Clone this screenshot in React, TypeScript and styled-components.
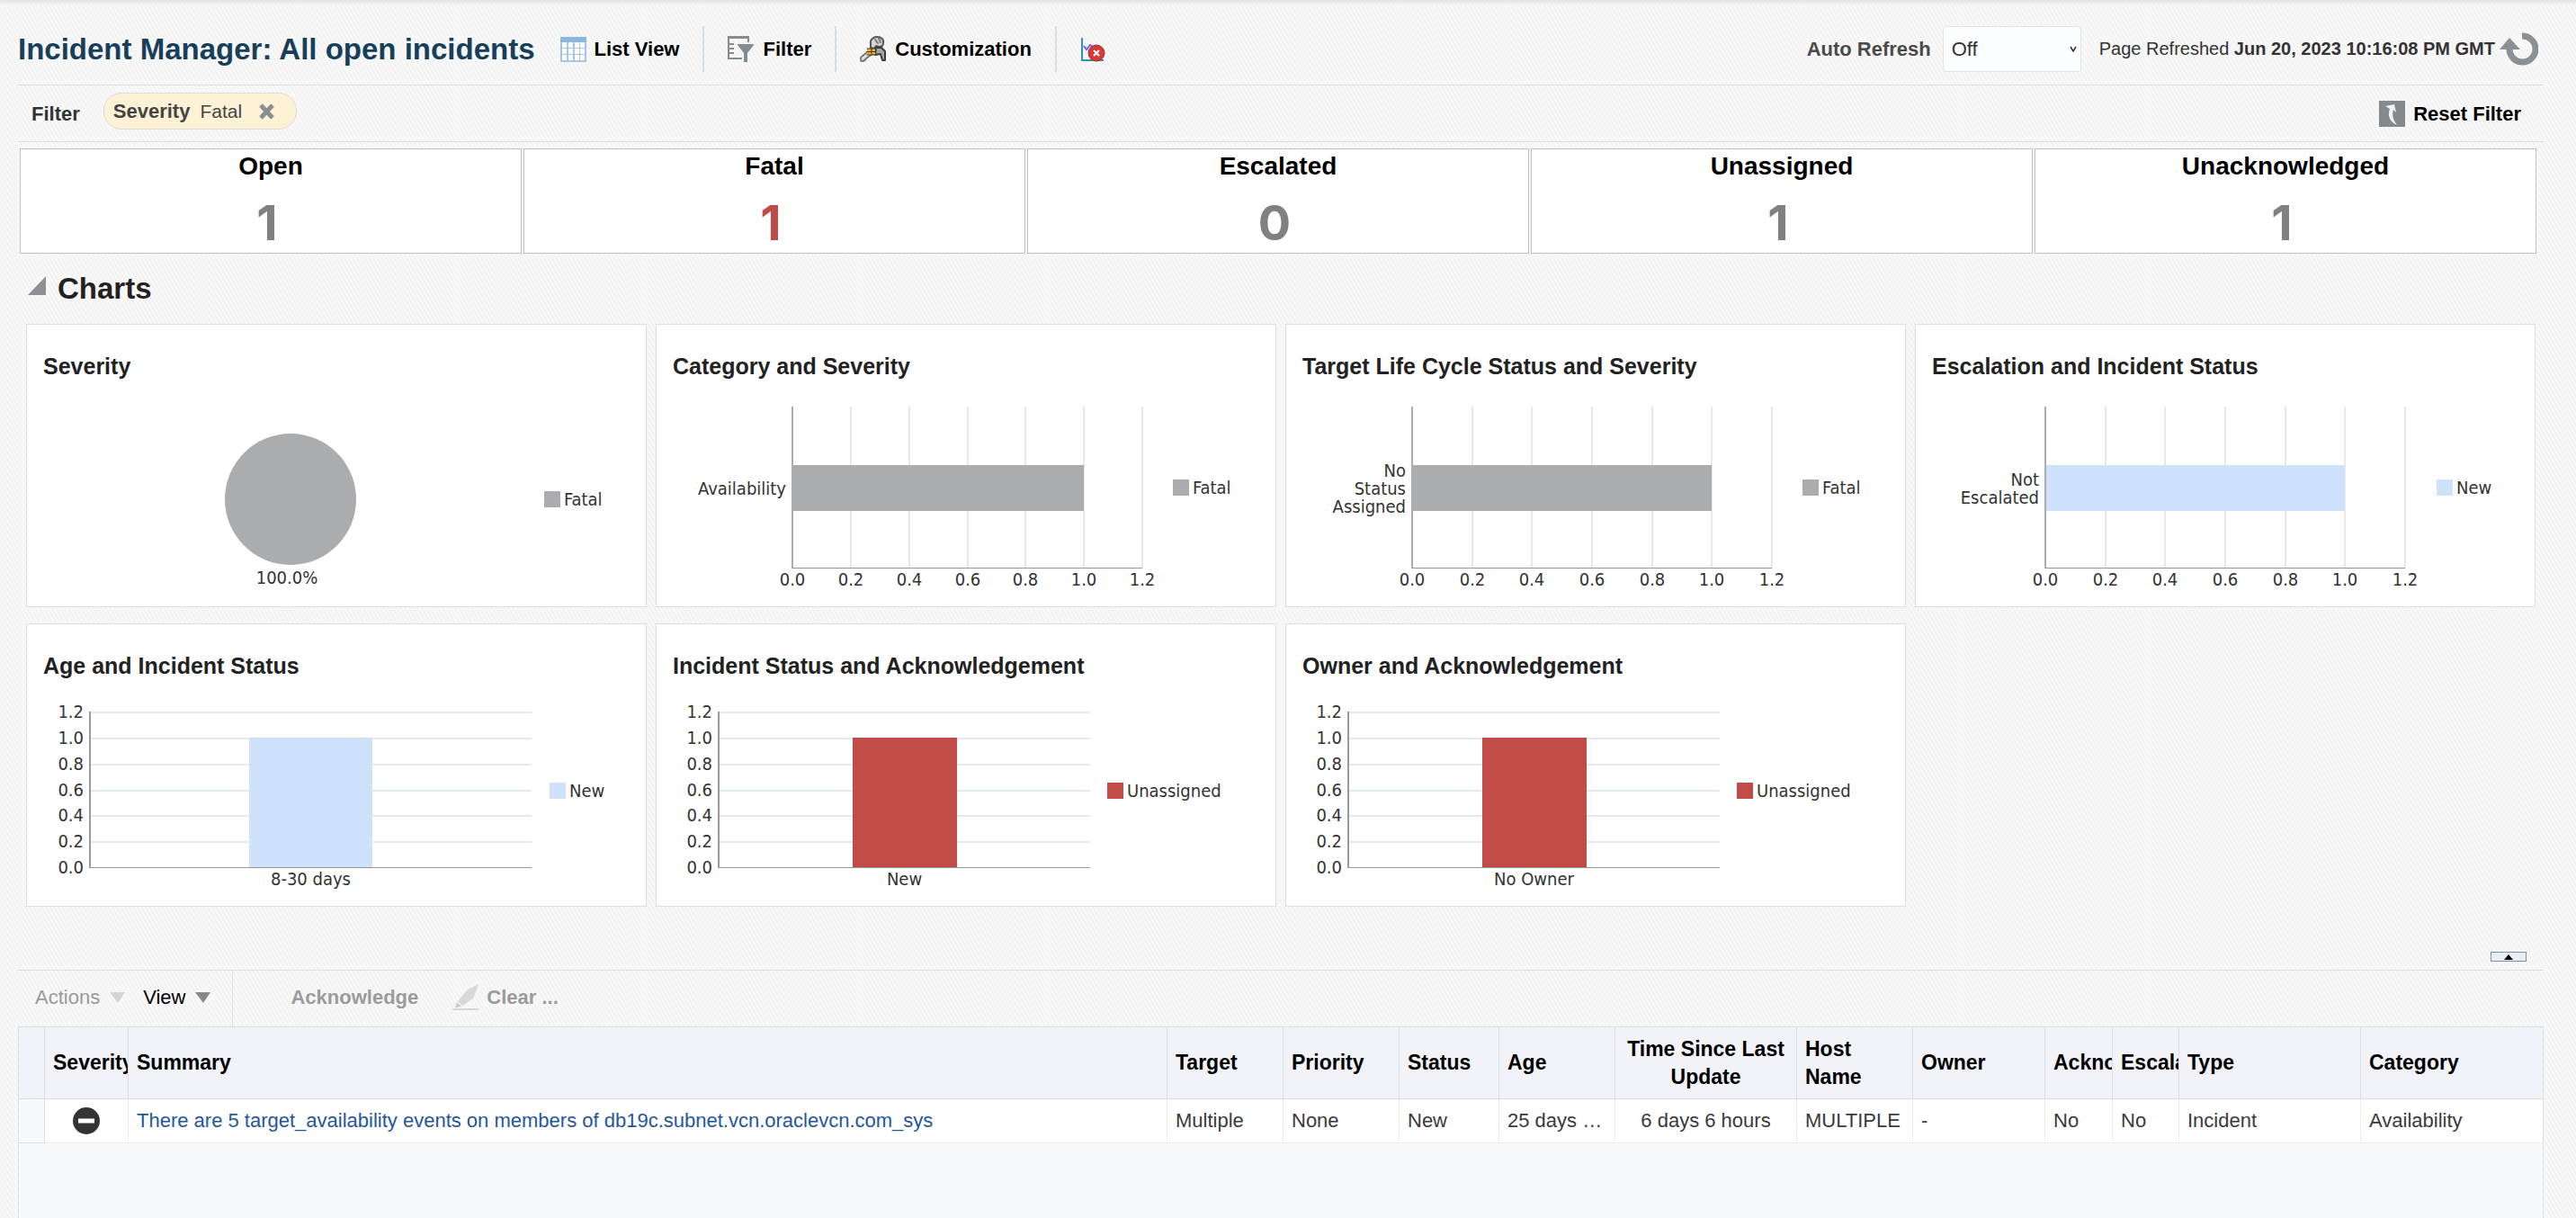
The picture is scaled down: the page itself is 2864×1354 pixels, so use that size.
import React from "react";
import styled, { createGlobalStyle } from "styled-components";

const GlobalStyle = createGlobalStyle`
  *, *::before, *::after { box-sizing: border-box; }
  html, body { margin: 0; padding: 0; }
  body {
    font-family: "Liberation Sans", Arial, sans-serif;
    font-size: 22px;
    color: #333;
    background-color: #f7f7f7;
    background-image: repeating-linear-gradient(60deg, #f3f3f3 0 2px, #f9f9f9 2px 4px);
  }
  button, select { font: inherit; color: inherit; }
  button { border: 0; padding: 0; background: none; cursor: pointer; }
`;

const line = "#d6dfe6";

/* ---------- page frame ---------- */

const Page = styled.div`
  display: flex;
  flex-direction: column;
  min-height: 100vh;
  padding: 0 36px 0 20px;
  background: linear-gradient(#e4e4e4, rgba(247, 247, 247, 0)) top / 100% 6px no-repeat;
`;

const TopBar = styled.header`
  display: flex;
  align-items: center;
  justify-content: space-between;
  padding: 29px 6px 14px 0;
  border-bottom: 1px solid ${line};
`;

const Cluster = styled.div`
  display: flex;
  align-items: center;
`;

const Title = styled.h1`
  margin: 0 2px 0 0;
  font-size: 33px;
  line-height: 40px;
  font-weight: bold;
  color: #173f5a;
  white-space: nowrap;
`;

const ToolButton = styled.button`
  display: flex;
  align-items: center;
  gap: 9px;
  height: 51px;
  padding: 0 26px;
  font-weight: bold;
  color: #000;
  white-space: nowrap;
  & + & { border-left: 2px solid ${line}; }
`;

const RefreshLabel = styled.label`
  font-weight: bold;
  color: #4a4a4a;
  margin-right: 13px;
`;

const SelectBox = styled.div`
  position: relative;
  width: 154px;
  margin-right: 20px;
`;

const Select = styled.select`
  display: block;
  width: 100%;
  height: 51px;
  padding: 0 9px;
  border: 1px solid #dfe4e7;
  border-radius: 4px;
  background: #fcfdfe;
  appearance: none;
`;

const Chevron = styled.svg`
  position: absolute;
  top: 22px;
  right: 5px;
  pointer-events: none;
`;

const Refreshed = styled.span`
  font-size: 20px;
  white-space: nowrap;
  margin-right: 5px;
`;

/* ---------- filter bar ---------- */

const FilterBar = styled.div`
  display: flex;
  align-items: flex-start;
  padding: 8px 25px 7px 15px;
  border-bottom: 1px solid #d8dadc;
`;

const FilterLabel = styled.span`
  margin-right: 26px;
  line-height: 47px;
  font-weight: bold;
`;

const Chip = styled.div`
  display: flex;
  align-items: center;
  height: 41px;
  padding: 0 23px 0 10px;
  border: 1px solid #dcdcd6;
  border-radius: 20px;
  background: #fdf2d6;
  color: #444;
`;

const ChipValue = styled.span`
  margin: 0 18px 0 11px;
  font-size: 21px;
`;

const IconButton = styled.button`
  display: flex;
`;

const ResetButton = styled.button`
  display: flex;
  align-items: center;
  gap: 9px;
  height: 47px;
  margin-left: auto;
  font-weight: bold;
  color: #000;
`;

/* ---------- counters ---------- */

const Counters = styled.section`
  display: grid;
  grid-template-columns: repeat(5, 1fr);
  gap: 2px;
  margin: 7px 8px 0 2px;
`;

const Counter = styled.div`
  height: 117px;
  padding-top: 4px;
  border: 1px solid #bfbfbf;
  background: #fff;
  text-align: center;
`;

const CounterLabel = styled.div`
  font-size: 28px;
  line-height: 30px;
  font-weight: bold;
  color: #000;
`;

const CounterValue = styled.div<{ $alert?: boolean }>`
  margin-top: 15px;
  padding-right: 8px;
  font-family: Inter, "Liberation Sans", sans-serif;
  font-size: 54px;
  line-height: 66px;
  font-weight: bold;
  color: ${(p) => (p.$alert ? "#c04a46" : "#808080")};
`;

/* ---------- charts ---------- */

const SectionHead = styled.button`
  display: flex;
  align-items: flex-start;
  gap: 13px;
  padding: 20px 11px;
  align-self: flex-start;
`;

const SectionTitle = styled.h2`
  margin: 0;
  font-size: 33px;
  line-height: 38px;
  font-weight: bold;
  color: #222;
`;

const ChartGrid = styled.section`
  display: grid;
  grid-template-columns: repeat(4, 1fr);
  gap: 18px 10px;
  margin: 0 9px;
`;

const ChartCard = styled.article`
  padding-top: 31px;
  border: 1px solid ${line};
  background: #fff;
  overflow: hidden;
`;

const ChartTitle = styled.h3`
  margin: 0;
  padding: 0 18px;
  font-size: 25px;
  line-height: 30px;
  font-weight: bold;
  color: #222;
`;

const ChartArea = styled.svg`
  display: block;
  width: 688px;
  height: 252px;
  font-family: "DejaVu Sans Condensed", "Noto Sans", sans-serif;
  font-size: 20px;
  fill: #333;
`;

const ticks = ["0.0", "0.2", "0.4", "0.6", "0.8", "1.0", "1.2"];

function Legend({ x, y, color, label }: { x: number; y: number; color: string; label: string }) {
  return (
    <g>
      <rect x={x} y={y} width="18" height="18" fill={color} />
      <text x={x + 22} y={y + 16}>{label}</text>
    </g>
  );
}

function PieChart({ color, label }: { color: string; label: string }) {
  return (
    <ChartArea role="img" aria-label="100.0%">
      <circle cx="293" cy="133" r="73" fill={color} />
      <text x="289" y="227" textAnchor="middle">100.0%</text>
      <Legend x={575} y={124} color={color} label={label} />
    </ChartArea>
  );
}

type BarProps = {
  from: number;
  to: number;
  category: string[];
  color: string;
  legend: string;
  legendX: number;
};

function HorizontalBar({ from, to, category, color, legend, legendX }: BarProps) {
  const at = (i: number) => Math.round(from + ((to - from) * i) / 6);
  return (
    <ChartArea role="img" aria-label={`${category.join(" ")}: 1`}>
      {ticks.map((t, i) => (
        <g key={t}>
          {i > 0 && <rect x={at(i) - 1} y="30" width="2" height="179" fill="#e5e9ec" />}
          <text x={at(i)} y="229" textAnchor="middle">{t}</text>
        </g>
      ))}
      <rect x={from} y="95" width={at(5) - from} height="51" fill={color} />
      <rect x={from - 1} y="30" width="2" height="180" fill="#a9adb2" />
      <rect x={from} y="209" width={to - from} height="1" fill="#999" />
      {category.map((word, i) => (
        <text key={word} x={from - 7} y={128 + i * 20 - (category.length - 1) * 10} textAnchor="end">
          {word}
        </text>
      ))}
      <Legend x={legendX} y={111} color={color} label={legend} />
    </ChartArea>
  );
}

function VerticalBar({ from, to, category, color, legend, legendX }: BarProps) {
  const at = (i: number) => Math.round(209 - (173 * i) / 6);
  const width = Math.round((to - from) * 0.28);
  const left = Math.round((from + to - width) / 2);
  return (
    <ChartArea role="img" aria-label={`${category.join(" ")}: 1`}>
      {ticks.map((t, i) => (
        <g key={t}>
          {i > 0 && <rect x={from} y={at(i)} width={to - from} height="2" fill="#e5eaee" />}
          <text x={from - 7} y={at(i) + 7} textAnchor="end">{t}</text>
        </g>
      ))}
      <rect x={left} y={at(5)} width={width} height={209 - at(5)} fill={color} />
      <rect x={from - 1} y="36" width="2" height="174" fill="#999" />
      <rect x={from} y="209" width={to - from} height="1" fill="#999" />
      <text x={(from + to) / 2} y="229" textAnchor="middle">{category.join(" ")}</text>
      <Legend x={legendX} y={115} color={color} label={legend} />
    </ChartArea>
  );
}

const gray = "#abacae";
const blue = "#cfe2fb";
const red = "#c04b47";

/* ---------- incident table ---------- */

const SplitterRow = styled.div`
  display: flex;
  justify-content: flex-end;
  padding: 50px 19px 9px;
`;

const SplitterButton = styled.button`
  display: flex;
  align-items: center;
  justify-content: center;
  width: 40px;
  height: 11px;
  border: 1px solid #7a8fae;
  background: #e9eef0;
`;

const TableBar = styled.div`
  display: flex;
  align-items: stretch;
  height: 63px;
  padding-left: 19px;
  border-top: 1px solid ${line};
`;

const MenuButton = styled.button<{ $muted?: boolean }>`
  display: flex;
  align-items: center;
  gap: 11px;
  padding: 0 20px 3px 0;
  color: ${(p) => (p.$muted ? "#999" : "#000")};
`;

const MenuDivider = styled.span`
  width: 1px;
  margin: 0 64px 0 4px;
  background: ${line};
`;

const ActionButton = styled.button`
  display: flex;
  align-items: center;
  gap: 8px;
  margin-right: 38px;
  padding-bottom: 2px;
  font-weight: bold;
  color: #9b9b9b;
`;

const TableFrame = styled.div`
  flex: 1;
  border: 1px solid ${line};
  border-bottom: 0;
  background: #f8f9fd;
`;

const Table = styled.table`
  width: 100%;
  table-layout: fixed;
  border-collapse: separate;
  border-spacing: 0;
`;

const Col = styled.col<{ $w?: number }>`
  width: ${(p) => (p.$w ? `${p.$w}px` : "auto")};
`;

const Th = styled.th<{ $center?: boolean }>`
  height: 80px;
  padding: 0 ${(p) => (p.$center ? 9 : 0)}px 0 9px;
  overflow: hidden;
  border-right: 1px solid ${line};
  border-bottom: 1px solid ${line};
  background: #f2f3f8;
  color: #000;
  font-size: 23px;
  line-height: 31px;
  font-weight: bold;
  text-align: ${(p) => (p.$center ? "center" : "left")};
  &:last-child { border-right: 0; }
`;

const Td = styled.td<{ $center?: boolean }>`
  height: 49px;
  padding: 0 ${(p) => (p.$center ? 9 : 0)}px 0 9px;
  overflow: hidden;
  border-right: 1px solid #ebedef;
  border-bottom: 1px solid #e8eaed;
  background: #fff;
  color: #3a3a3a;
  line-height: 30px;
  white-space: nowrap;
  text-align: ${(p) => (p.$center ? "center" : "left")};
  &:last-child { border-right: 0; }
`;

const RowHeadCell = styled(Td)`
  background: #f8f9fd;
  border-color: ${line};
`;

const SummaryLink = styled.a`
  color: #24579a;
  text-decoration: none;
`;

const SeverityIcon = styled.svg`
  display: block;
  margin: 0 auto;
`;

const columns: { name: string; width?: number; center?: boolean; value: React.ReactNode }[] = [
  {
    name: "Severity",
    width: 93,
    value: (
      <SeverityIcon width="30" height="30" viewBox="0 0 30 30" role="img" aria-label="Fatal">
        <circle cx="15" cy="15" r="15" fill="#333436" />
        <rect x="6" y="12.5" width="18" height="5" fill="#fff" />
      </SeverityIcon>
    ),
  },
  {
    name: "Summary",
    value: (
      <SummaryLink href="#incident">
        There are 5 target_availability events on members of db19c.subnet.vcn.oraclevcn.com_sys
      </SummaryLink>
    ),
  },
  { name: "Target", width: 129, value: "Multiple" },
  { name: "Priority", width: 129, value: "None" },
  { name: "Status", width: 111, value: "New" },
  { name: "Age", width: 129, value: "25 days …" },
  { name: "Time Since Last Update", width: 202, center: true, value: "6 days 6 hours" },
  { name: "Host Name", width: 129, value: "MULTIPLE" },
  { name: "Owner", width: 147, value: "-" },
  { name: "Acknowledged", width: 75, value: "No" },
  { name: "Escalated", width: 74, value: "No" },
  { name: "Type", width: 202, value: "Incident" },
  { name: "Category", width: 202, value: "Availability" },
];

/* ---------- icons ---------- */

const ListIcon = () => (
  <svg width="29" height="28" viewBox="0 0 29 28" aria-hidden="true">
    <rect width="29" height="28" fill="#a3c7ea" />
    <rect width="29" height="6" fill="#8cb6e2" />
    {[6, 13, 20].map((y) =>
      [2, 9, 16, 22].map((x) => <rect key={`${x}-${y}`} x={x} y={y} width="5" height="6" fill="#fff" />)
    )}
  </svg>
);

const FilterIcon = () => (
  <svg width="30" height="29" viewBox="0 0 30 29" aria-hidden="true">
    <g fill="#868b90">
      <rect width="24" height="3" />
      <rect x="22" width="2" height="7" />
      <rect width="2" height="26" />
      <rect y="24" width="16" height="2" />
      <rect x="2" y="8" width="5" height="2" />
      <rect x="2" y="13" width="5" height="2" />
      <rect x="2" y="18" width="5" height="2" />
      <path d="M11 9h18v1l-7 9v10h-4V19l-7-9z" />
    </g>
  </svg>
);

const ToolsIcon = () => (
  <svg width="30" height="29" viewBox="0 0 30 29" aria-hidden="true" strokeLinejoin="round" strokeLinecap="round">
    <path d="m11 16-8 6c-3 2-3 5-1 6 2 0 4-1 5-3l8-6z" fill="#e2e2e2" stroke="#777" strokeWidth="2" />
    <path d="M12 9c-1-5 3-8 7-8 5 0 8 3 7 7 0 3-2 4-5 4l-3-1-2 3-4-1z" fill="#d6d6d6" stroke="#555" strokeWidth="2" />
    <path d="m17 4 3 4M21 3l2 4" stroke="#777" strokeWidth="2" />
    <path d="m18 13 6 0 4 4v10h-3l-2-7-6 1z" fill="#a5a5a5" stroke="#3c3c3c" strokeWidth="2" />
    <rect x="8" y="14" width="9" height="7" fill="#e9ae35" />
    <path d="M8 14h9M8 17.500h9M8 21h9M13 14v7" stroke="#463a22" strokeWidth="1" />
  </svg>
);

const ChartOffIcon = () => (
  <svg width="28" height="28" viewBox="0 0 28 28" aria-hidden="true">
    <path d="M2 1v25h24" fill="none" stroke="#2f93b8" strokeWidth="2" />
    <path d="M4 10l3 4 4-5 3 2" fill="none" stroke="#6666e0" strokeWidth="2" />
    <circle cx="18" cy="18" r="9" fill="#d43a3a" stroke="#a82a2a" strokeWidth="1" />
    <path d="m15 15 6 6m0-6-6 6" stroke="#fff" strokeWidth="2" />
  </svg>
);

const RefreshIcon = () => (
  <svg width="43" height="37" viewBox="0 0 43 37" aria-hidden="true">
    <path d="M25 4A14.500 14.500 0 1 1 11 18" fill="none" stroke="#8b9094" strokeWidth="7" />
    <path d="M11 6 23 19H0z" fill="#8b9094" />
  </svg>
);

const ResetIcon = () => (
  <svg width="29" height="29" viewBox="0 0 29 29" aria-hidden="true">
    <rect width="29" height="29" fill="#84898d" />
    <path d="M12 9c-3 8 0 14 8 18-4-5-6-11-4-17l3 3-2-9-10 2z" fill="#f2f2f2" />
  </svg>
);

const CloseIcon = () => (
  <svg width="19" height="18" viewBox="0 0 19 18" aria-hidden="true">
    <path d="m3 2 13 14M16 2 3 16" stroke="#8b8e90" strokeWidth="5" />
  </svg>
);

const PencilIcon = () => (
  <svg width="30" height="30" viewBox="0 0 30 30" aria-hidden="true">
    <path d="M29 0 17 6 6 19l5 5 12-8z" fill="#d6d9da" />
    <path d="m5 20 5 5-7 1z" fill="#c9cccd" />
    <rect y="27" width="29" height="2" fill="#d3d6d7" />
  </svg>
);

const DownTriangle = ({ color }: { color: string }) => (
  <svg width="17" height="12" viewBox="0 0 17 12" aria-hidden="true">
    <path d="M0 0h17L9 12z" fill={color} />
  </svg>
);

export default function App() {
  return (
    <>
      <GlobalStyle />
      <Page>
        <TopBar>
          <Cluster>
            <Title>Incident Manager: All open incidents</Title>
            <ToolButton><ListIcon />List View</ToolButton>
            <ToolButton><FilterIcon />Filter</ToolButton>
            <ToolButton><ToolsIcon />Customization</ToolButton>
            <ToolButton aria-label="Hide charts"><ChartOffIcon /></ToolButton>
          </Cluster>
          <Cluster>
            <RefreshLabel htmlFor="auto-refresh">Auto Refresh</RefreshLabel>
            <SelectBox>
              <Select id="auto-refresh" defaultValue="Off">
                <option>Off</option>
              </Select>
              <Chevron width="8" height="7" viewBox="0 0 8 7" aria-hidden="true">
                <path d="m1 1 3 5 3-5" fill="none" stroke="#333" strokeWidth="1.500" />
              </Chevron>
            </SelectBox>
            <Refreshed>
              Page Refreshed <b>Jun 20, 2023 10:16:08 PM GMT</b>
            </Refreshed>
            <IconButton aria-label="Refresh"><RefreshIcon /></IconButton>
          </Cluster>
        </TopBar>

        <FilterBar>
          <FilterLabel>Filter</FilterLabel>
          <Chip>
            <b>Severity</b>
            <ChipValue>Fatal</ChipValue>
            <IconButton aria-label="Remove filter"><CloseIcon /></IconButton>
          </Chip>
          <ResetButton><ResetIcon />Reset Filter</ResetButton>
        </FilterBar>

        <Counters>
          {[
            ["Open", "1"],
            ["Fatal", "1"],
            ["Escalated", "0"],
            ["Unassigned", "1"],
            ["Unacknowledged", "1"],
          ].map(([label, value]) => (
            <Counter key={label}>
              <CounterLabel>{label}</CounterLabel>
              <CounterValue $alert={label === "Fatal"}>{value}</CounterValue>
            </Counter>
          ))}
        </Counters>

        <SectionHead aria-expanded="true">
          <svg width="20" height="38" viewBox="0 0 20 38" aria-hidden="true">
            <path d="M20 5v21H0z" fill="#8d9195" />
          </svg>
          <SectionTitle>Charts</SectionTitle>
        </SectionHead>

        <ChartGrid>
          <ChartCard>
            <ChartTitle>Severity</ChartTitle>
            <PieChart color={gray} label="Fatal" />
          </ChartCard>
          <ChartCard>
            <ChartTitle>Category and Severity</ChartTitle>
            <HorizontalBar from={151} to={540} category={["Availability"]} color={gray} legend="Fatal" legendX={574} />
          </ChartCard>
          <ChartCard>
            <ChartTitle>Target Life Cycle Status and Severity</ChartTitle>
            <HorizontalBar from={140} to={540} category={["No", "Status", "Assigned"]} color={gray} legend="Fatal" legendX={574} />
          </ChartCard>
          <ChartCard>
            <ChartTitle>Escalation and Incident Status</ChartTitle>
            <HorizontalBar from={144} to={544} category={["Not", "Escalated"]} color={blue} legend="New" legendX={579} />
          </ChartCard>
          <ChartCard>
            <ChartTitle>Age and Incident Status</ChartTitle>
            <VerticalBar from={70} to={561} category={["8-30 days"]} color={blue} legend="New" legendX={581} />
          </ChartCard>
          <ChartCard>
            <ChartTitle>Incident Status and Acknowledgement</ChartTitle>
            <VerticalBar from={69} to={482} category={["New"]} color={red} legend="Unassigned" legendX={501} />
          </ChartCard>
          <ChartCard>
            <ChartTitle>Owner and Acknowledgement</ChartTitle>
            <VerticalBar from={69} to={482} category={["No Owner"]} color={red} legend="Unassigned" legendX={501} />
          </ChartCard>
        </ChartGrid>

        <SplitterRow>
          <SplitterButton aria-label="Collapse pane">
            <svg width="10" height="6" viewBox="0 0 10 6" aria-hidden="true">
              <path d="M5 0l5 6H0z" fill="#000" />
            </svg>
          </SplitterButton>
        </SplitterRow>

        <TableBar>
          <MenuButton $muted>Actions<DownTriangle color="#d3d6d7" /></MenuButton>
          <MenuButton>View<DownTriangle color="#84898d" /></MenuButton>
          <MenuDivider />
          <ActionButton>Acknowledge</ActionButton>
          <ActionButton><PencilIcon />Clear ...</ActionButton>
        </TableBar>

        <TableFrame>
          <Table>
            <colgroup>
              <Col $w={29} />
              {columns.map((c) => <Col key={c.name} $w={c.width} />)}
            </colgroup>
            <thead>
              <tr>
                <Th aria-label="Row" />
                {columns.map((c) => <Th key={c.name} $center={c.center}>{c.name}</Th>)}
              </tr>
            </thead>
            <tbody>
              <tr>
                <RowHeadCell />
                {columns.map((c) => (
                  <Td key={c.name} $center={c.center || c.name === "Severity"}>{c.value}</Td>
                ))}
              </tr>
            </tbody>
          </Table>
        </TableFrame>
      </Page>
    </>
  );
}
